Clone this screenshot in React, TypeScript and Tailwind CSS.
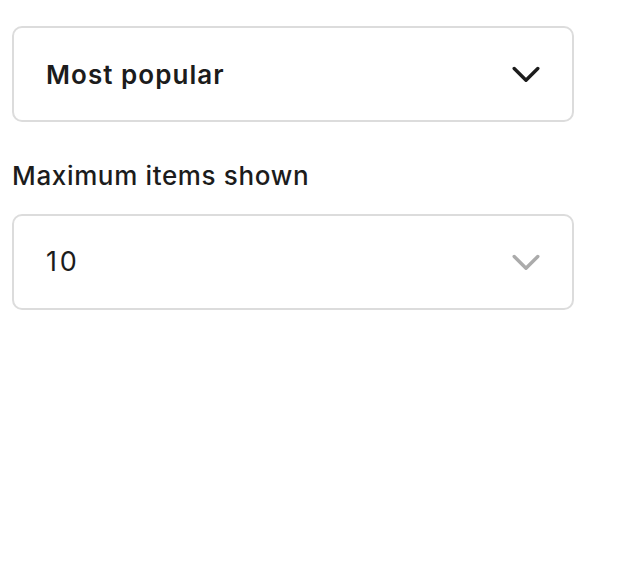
function Chevron({ muted }: { muted?: boolean }) {
  return (
    <svg
      width="28"
      height="17"
      viewBox="0 0 28 17"
      fill="none"
      className={muted ? "text-[#ababab]" : "text-[#1c1c1c]"}
    >
      <path d="M2.2 2.5 14 14.3 25.8 2.5" stroke="currentColor" strokeWidth="3.4" strokeLinecap="round" strokeLinejoin="round" />
    </svg>
  );
}

function SelectBox({ value, bold, muted }: { value: string; bold?: boolean; muted?: boolean }) {
  return (
    <div className="flex h-[96px] w-[562px] items-center justify-between rounded-[10px] border-2 border-[#dcdcdc] bg-white pl-[32px] pr-[32px]">
      <span
        className={
          bold
            ? "text-[26px] font-semibold tracking-[0.04em] text-[#1c1c1c]"
            : "text-[27px] font-normal tracking-[0.1em] text-[#1c1c1c]"
        }
      >
        {value}
      </span>
      <Chevron muted={muted} />
    </div>
  );
}

export default function App() {
  return (
    <div className="min-h-[570px] w-[620px] bg-white px-[12px] pt-[26px] font-['Inter',sans-serif]">
      <SelectBox value="Most popular" bold />
      <div className="mt-[38px] mb-[22px] h-[32px] text-[26px] font-medium leading-[32px] tracking-[0.025em] text-[#1c1c1c]">
        Maximum items shown
      </div>
      <SelectBox value="10" muted />
    </div>
  );
}
